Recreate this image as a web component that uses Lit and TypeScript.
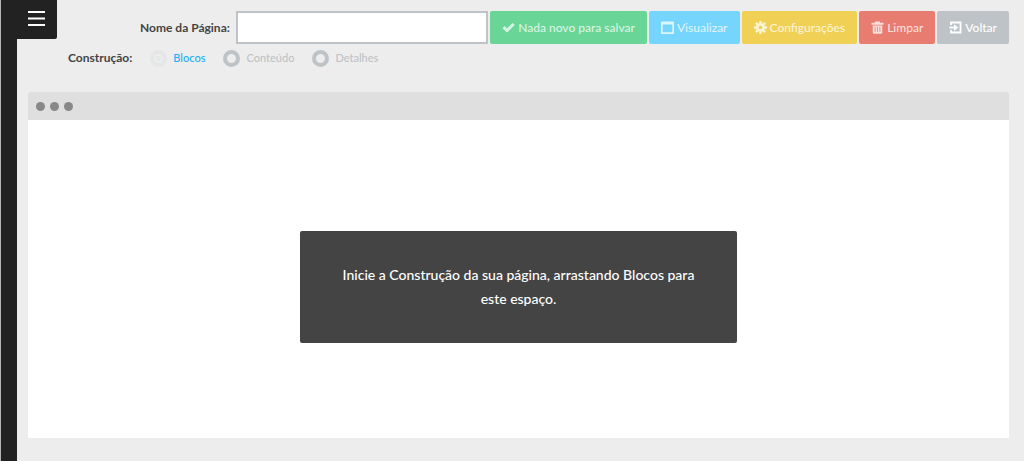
import { LitElement, html, css, svg } from "lit";
import { customElement, state } from "lit/decorators.js";

const icons = {
  check: svg`<path d="M.5 7.200 2.600 5.100 5 7.500 10.600 2 12.700 4.100 5 11.600Z" fill="currentColor"/>`,
  window: svg`<path fill-rule="evenodd" d="M1 .500h11a1 1 0 0 1 1 1v10.500a1 1 0 0 1-1 1H1a1 1 0 0 1-1-1V1.500a1 1 0 0 1 1-1ZM1.700 3.500v7.800h9.600V3.500Z" fill="currentColor"/>`,
  gear: svg`<circle cx="6.500" cy="6.500" r="3.200" fill="none" stroke="currentColor" stroke-width="2.800"/><path d="M6.500 0v2M6.500 11v2M0 6.500h2M11 6.500h2M1.900 1.900l1.500 1.500M9.600 9.600l1.500 1.500M1.900 11.100l1.500-1.500M9.600 3.400l1.500-1.500" stroke="currentColor" stroke-width="2.400"/>`,
  trash: svg`<path fill-rule="evenodd" d="M4 1.800V.5h5v1.300h3.500v2H.5v-2ZM1.700 4.500h9.600v7a1.200 1.200 0 0 1-1.200 1.200H2.900a1.200 1.200 0 0 1-1.200-1.200ZM3.700 5.800v5h.8v-5ZM6.100 5.800v5h.8v-5ZM8.500 5.800v5h.8v-5Z" fill="currentColor"/>`,
  exit: svg`<path d="M2 4V1.500h9.500v10H2V9" fill="none" stroke="currentColor" stroke-width="1.800"/><path d="M.5 5.600H5V3.300l4.300 3.300L5 9.900V7.500H.5Z" fill="currentColor"/>`,
};

type IconName = keyof typeof icons;

interface Action {
  label: string;
  tone: string;
  icon: IconName;
}

const actions: Action[] = [
  { label: "Nada novo para salvar", tone: "save", icon: "check" },
  { label: "Visualizar", tone: "view", icon: "window" },
  { label: "Configurações", tone: "config", icon: "gear" },
  { label: "Limpar", tone: "clear", icon: "trash" },
  { label: "Voltar", tone: "back", icon: "exit" },
];

const modes = ["Blocos", "Conteúdo", "Detalhes"];

@customElement("app-root")
export class AppRoot extends LitElement {
  @state() private mode = "Blocos";

  static styles = css`
    :host {
      display: flex;
      min-height: 100vh;
      box-sizing: border-box;
      border-left: 1px solid #b4b4b4;
      background: #ededed;
      color: #444;
      font-family: Lato, "Liberation Sans", sans-serif;
      font-size: 12px;
      line-height: 20px;
    }
    * {
      box-sizing: border-box;
    }
    .rail {
      position: relative;
      flex: none;
      width: 16px;
      background: #222;
    }
    .menu {
      position: absolute;
      top: 0;
      left: 0;
      display: flex;
      justify-content: flex-end;
      width: 56px;
      height: 39px;
      padding: 11px 12px 0 0;
      border: 0;
      border-radius: 0 0 2px 0;
      background: #222;
      color: #fff;
    }
    .main {
      flex: 1;
      min-width: 0;
      display: flex;
      flex-direction: column;
      padding: 11px 15px 23px 11px;
    }
    .toolbar {
      display: flex;
      align-items: center;
      gap: 2px;
      padding-left: 112px;
    }
    .label {
      font-weight: 700;
      white-space: nowrap;
    }
    .name-label {
      margin-right: 4px;
    }
    .name {
      flex: 1;
      min-width: 0;
      height: 33px;
      padding: 0 8px;
      border: 2px solid #bdc3c7;
      border-radius: 0;
      background: #fff;
      font: inherit;
      color: inherit;
    }
    .action {
      display: flex;
      align-items: center;
      gap: 3px;
      height: 33px;
      padding: 0 12px;
      border: 0;
      border-radius: 2px;
      font: inherit;
      font-weight: 500;
      color: rgba(255, 255, 255, 0.75);
      white-space: nowrap;
    }
    .save { background: #69d697; }
    .view { background: #75d5fc; }
    .config { background: #f0d155; }
    .clear { background: #e97c70; }
    .back { background: #bdc3c7; color: #fff; }
    .modes {
      display: flex;
      align-items: center;
      gap: 18px;
      padding: 4px 0 0 40px;
    }
    .mode {
      display: flex;
      align-items: center;
      gap: 6px;
      font-size: 11px;
      font-weight: 500;
      color: #bdc3c7;
    }
    .radio {
      appearance: none;
      width: 17px;
      height: 17px;
      margin: 0;
      border: 4px solid #bdc3c7;
      border-radius: 50%;
    }
    .radio:checked {
      border-color: #e4e6e7;
      background: radial-gradient(circle, #e4e6e7 2px, transparent 3px);
    }
    .mode.active {
      color: #1eaff5;
    }
    .frame {
      flex: 1;
      display: flex;
      flex-direction: column;
      margin-top: 24px;
      border-radius: 2px 2px 0 0;
      background: #fff;
    }
    .frame-bar {
      display: flex;
      align-items: center;
      gap: 5px;
      height: 28px;
      padding: 0 8px;
      border-radius: 2px 2px 0 0;
      background: #dfdfdf;
    }
    .dot {
      width: 9px;
      height: 9px;
      border-radius: 50%;
      background: #888;
    }
    .canvas {
      flex: 1;
      display: flex;
      align-items: center;
      justify-content: center;
      padding-top: 15px;
    }
    .message {
      max-width: 437px;
      margin: 0;
      padding: 32px 40px;
      border-radius: 2px;
      background: #444;
      color: #fff;
      font-size: 14px;
      font-weight: 500;
      line-height: 24px;
      text-align: center;
    }
  `;

  render() {
    return html`
      <nav class="rail">
        <button class="menu" aria-label="Menu">
          <svg width="17" height="16" viewBox="0 0 17 16" aria-hidden="true">
            <path d="M0 1h17M0 7.500h17M0 14h17" stroke="currentColor" stroke-width="1.800" />
          </svg>
        </button>
      </nav>
      <main class="main">
        <div class="toolbar">
          <label class="label name-label" for="page-name">Nome da Página:</label>
          <input class="name" id="page-name" type="text" />
          ${actions.map(
            (a) => html`<button class="action ${a.tone}">
              <svg width="13" height="13" viewBox="0 0 13 13" aria-hidden="true">${icons[a.icon]}</svg>
              <span>${a.label}</span>
            </button>`
          )}
        </div>
        <div class="modes" role="radiogroup" aria-labelledby="mode-title">
          <span class="label" id="mode-title">Construção:</span>
          ${modes.map(
            (m) => html`<label class="mode ${m === this.mode ? "active" : ""}">
              <input
                class="radio"
                type="radio"
                name="mode"
                .checked=${m === this.mode}
                @change=${() => (this.mode = m)}
              />
              ${m}
            </label>`
          )}
        </div>
        <section class="frame">
          <div class="frame-bar">
            <span class="dot"></span><span class="dot"></span><span class="dot"></span>
          </div>
          <div class="canvas">
            <p class="message">Inicie a Construção da sua página, arrastando Blocos para este espaço.</p>
          </div>
        </section>
      </main>
    `;
  }
}
